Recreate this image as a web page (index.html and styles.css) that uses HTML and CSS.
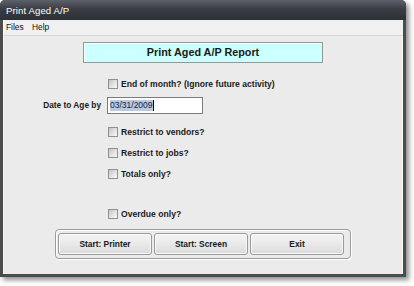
FILE: index.html
```html
<!DOCTYPE html>
<html lang="en">
<head>
    <meta charset="UTF-8">
    <title>Print Aged A/P</title>
    <link rel="stylesheet" href="styles.css">
</head>
<body>

<div class="window">
    <div class="titlebar">Print Aged A/P</div>
    <div class="menubar">
        <span class="menu-item">Files</span>
        <span class="menu-item">Help</span>
    </div>

    <div class="content">
        <div class="heading">Print Aged A/P Report</div>

        <div class="row row-eom">
            <span class="check"></span>
            <span class="label">End of month? (Ignore future activity)</span>
        </div>

        <div class="row row-date">
            <span class="date-label">Date to Age by</span>
            <div class="date-input"><span class="selected">03/31/2009</span><span class="caret"></span></div>
        </div>

        <div class="row row-vendors">
            <span class="check"></span>
            <span class="label">Restrict to vendors?</span>
        </div>
        <div class="row">
            <span class="check"></span>
            <span class="label">Restrict to jobs?</span>
        </div>
        <div class="row">
            <span class="check"></span>
            <span class="label">Totals only?</span>
        </div>

        <div class="row row-overdue">
            <span class="check"></span>
            <span class="label">Overdue only?</span>
        </div>

        <!-- action buttons -->
        <div class="button-group">
            <button class="btn">Start: Printer</button>
            <button class="btn">Start: Screen</button>
            <button class="btn">Exit</button>
        </div>
    </div>
</div>

</body>
</html>
```

FILE: styles.css
```css
* {
    box-sizing: border-box;
}

body {
    margin: 0;
    background-color: #ffffff;
    font-family: "Liberation Sans", Arial, sans-serif;
    width: 414px;
    height: 286px;
    overflow: hidden;
}

.window {
    width: 406px;
    height: 277px;
    background-color: #4c4c4c;
    border-radius: 5px 5px 0 0;
    padding: 0 3px 3px 3px;
    box-shadow: 3px 3px 5px rgba(0, 0, 0, 0.45);
    display: flex;
    flex-direction: column;
}

.titlebar {
    height: 20px;
    margin: 0 -3px;
    padding: 0 6px;
    border-radius: 5px 5px 0 0;
    background: linear-gradient(#5d616b, #3a3d44 45%, #2d3036);
    color: #ffffff;
    font-size: 9.6px;
    line-height: 21px;
    letter-spacing: 0.1px;
}

.menubar {
    height: 16px;
    background-color: #f0f0f0;
    border-bottom: 1px solid #d9d9d9;
    border-left: 1px solid #ffffff;
    font-size: 8.4px;
    line-height: 15px;
    color: #111;
    padding-left: 2px;
}

.menu-item {
    margin-right: 6px;
}

.content {
    flex: 1;
    background-color: #ebebeb;
    border-left: 1px solid #f6f6f6;
    border-right: 1px solid #f6f6f6;
    display: flex;
    flex-direction: column;
    color: #1a1a1a;
    font-weight: bold;
    font-size: 8.6px;
}

.heading {
    margin: 6px 0 0 79px;
    width: 240px;
    height: 21px;
    background-color: #ccffff;
    border: 1px solid #8c9a9a;
    box-shadow: inset 1px 1px 0 #ffffff;
    text-align: center;
    font-size: 10.8px;
    line-height: 19px;
}

.row {
    display: flex;
    align-items: center;
    height: 21px;
    padding-left: 104px;
}

.row-eom {
    margin-top: 10px;
}

.row-date {
    height: 22px;
    padding-left: 0;
}

.row-vendors {
    margin-top: 5px;
}

.row-overdue {
    margin-top: 19px;
}

.check {
    width: 10px;
    height: 10px;
    border: 1px solid #8f9090;
    background: linear-gradient(135deg, #c4c4c4, #e6e6e6 60%, #f6f6f6);
    margin-right: 3px;
}

.date-label {
    width: 103px;
    text-align: right;
    padding-right: 6px;
    font-size: 8.3px;
}

.date-input {
    width: 96px;
    height: 17px;
    background-color: #ffffff;
    border: 1px solid #7b7b7b;
    display: flex;
    align-items: center;
    padding-left: 2px;
    font-weight: normal;
    font-size: 8.5px;
}

.selected {
    background-color: #b9c9e2;
    color: #13233f;
    line-height: 11px;
}

.caret {
    width: 1px;
    height: 11px;
    background-color: #000;
}

.button-group {
    margin: 5px 0 0 51px;
    width: 296px;
    height: 30px;
    border: 1px solid #9c9c9c;
    border-radius: 4px;
    box-shadow: inset 1px 1px 0 #ffffff, 1px 1px 0 #ffffff;
    display: flex;
    gap: 2px;
    padding: 3px 3px 0 2px;
}

.btn {
    width: 94px;
    height: 22px;
    border: 1px solid #9a9a9a;
    border-radius: 3px;
    background: linear-gradient(#f4f4f4, #e9e9e9 50%, #dadada);
    box-shadow: inset 0 0 0 1px #fbfbfb;
    font-family: "Liberation Sans", Arial, sans-serif;
    font-weight: bold;
    font-size: 8.4px;
    color: #1a1a1a;
    padding: 0;
}
```
